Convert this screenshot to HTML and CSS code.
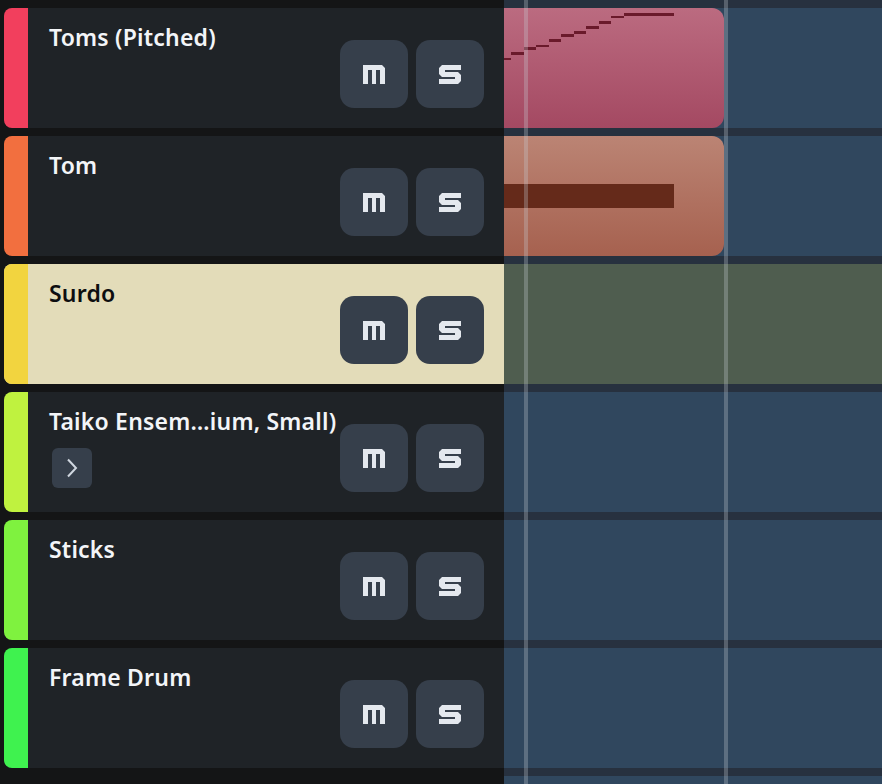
FILE: index.html
```html
<!DOCTYPE html>
<html>
<head>
<meta charset="utf-8">
<link rel="stylesheet" href="styles.css">
</head>
<body>
<div class="app">
  <div class="headers">
    <div class="track">
      <div class="strip c1"></div>
      <div class="head">
        <div class="info"><div class="title">Toms (Pitched)</div></div>
        <div class="btns">
          <button class="btn"><svg width="22" height="19" viewBox="0 0 22 19"><path d="M0 0H19L22 3V19H17V5H13V19H9V5H5V19H0Z"/></svg></button>
          <button class="btn"><svg width="22" height="19" viewBox="0 0 22 19"><path d="M3 0H22V5H6V7H19L22 10V16L19 19H0V14H16V12H3L0 9V3Z"/></svg></button>
        </div>
      </div>
    </div>
    <div class="track">
      <div class="strip c2"></div>
      <div class="head">
        <div class="info"><div class="title">Tom</div></div>
        <div class="btns">
          <button class="btn"><svg width="22" height="19" viewBox="0 0 22 19"><path d="M0 0H19L22 3V19H17V5H13V19H9V5H5V19H0Z"/></svg></button>
          <button class="btn"><svg width="22" height="19" viewBox="0 0 22 19"><path d="M3 0H22V5H6V7H19L22 10V16L19 19H0V14H16V12H3L0 9V3Z"/></svg></button>
        </div>
      </div>
    </div>
    <div class="track selected">
      <div class="strip c3"></div>
      <div class="head">
        <div class="info"><div class="title">Surdo</div></div>
        <div class="btns">
          <button class="btn"><svg width="22" height="19" viewBox="0 0 22 19"><path d="M0 0H19L22 3V19H17V5H13V19H9V5H5V19H0Z"/></svg></button>
          <button class="btn"><svg width="22" height="19" viewBox="0 0 22 19"><path d="M3 0H22V5H6V7H19L22 10V16L19 19H0V14H16V12H3L0 9V3Z"/></svg></button>
        </div>
      </div>
    </div>
    <div class="track">
      <div class="strip c4"></div>
      <div class="head">
        <div class="info">
          <div class="title">Taiko Ensem…ium, Small)</div>
          <button class="expand"><svg width="12" height="20" viewBox="0 0 12 20"><path d="M2 1.5L10 10L2 18.5"/></svg></button>
        </div>
        <div class="btns">
          <button class="btn"><svg width="22" height="19" viewBox="0 0 22 19"><path d="M0 0H19L22 3V19H17V5H13V19H9V5H5V19H0Z"/></svg></button>
          <button class="btn"><svg width="22" height="19" viewBox="0 0 22 19"><path d="M3 0H22V5H6V7H19L22 10V16L19 19H0V14H16V12H3L0 9V3Z"/></svg></button>
        </div>
      </div>
    </div>
    <div class="track">
      <div class="strip c5"></div>
      <div class="head">
        <div class="info"><div class="title">Sticks</div></div>
        <div class="btns">
          <button class="btn"><svg width="22" height="19" viewBox="0 0 22 19"><path d="M0 0H19L22 3V19H17V5H13V19H9V5H5V19H0Z"/></svg></button>
          <button class="btn"><svg width="22" height="19" viewBox="0 0 22 19"><path d="M3 0H22V5H6V7H19L22 10V16L19 19H0V14H16V12H3L0 9V3Z"/></svg></button>
        </div>
      </div>
    </div>
    <div class="track">
      <div class="strip c6"></div>
      <div class="head">
        <div class="info"><div class="title">Frame Drum</div></div>
        <div class="btns">
          <button class="btn"><svg width="22" height="19" viewBox="0 0 22 19"><path d="M0 0H19L22 3V19H17V5H13V19H9V5H5V19H0Z"/></svg></button>
          <button class="btn"><svg width="22" height="19" viewBox="0 0 22 19"><path d="M3 0H22V5H6V7H19L22 10V16L19 19H0V14H16V12H3L0 9V3Z"/></svg></button>
        </div>
      </div>
    </div>
  </div>
  <div class="timeline">
    <div class="lane">
      <div class="clip clip-pink">
        <div class="note" style="left:0;top:50px;width:7px;height:2px"></div>
        <div class="note" style="left:7px;top:44px;width:13px;height:3px"></div>
        <div class="note" style="left:20px;top:39px;width:12px;height:3px"></div>
        <div class="note" style="left:32px;top:37px;width:13px;height:2px"></div>
        <div class="note" style="left:45px;top:31px;width:12px;height:3px"></div>
        <div class="note" style="left:57px;top:26px;width:13px;height:3px"></div>
        <div class="note" style="left:70px;top:23px;width:12px;height:3px"></div>
        <div class="note" style="left:82px;top:18px;width:13px;height:3px"></div>
        <div class="note" style="left:95px;top:13px;width:12px;height:3px"></div>
        <div class="note" style="left:107px;top:8px;width:13px;height:2px"></div>
        <div class="note" style="left:120px;top:5px;width:50px;height:3px"></div>
      </div>
    </div>
    <div class="lane">
      <div class="clip clip-orange">
        <div class="note note-brown" style="left:0;top:48px;width:170px;height:24px"></div>
      </div>
    </div>
    <div class="lane lane-selected"></div>
    <div class="lane"></div>
    <div class="lane"></div>
    <div class="lane"></div>
    <div class="lane"></div>
    <div class="vline" style="left:20px"></div>
    <div class="vline" style="left:220px"></div>
  </div>
</div>
</body>
</html>
```
FILE: styles.css
```css
* { box-sizing: border-box; }
html, body { margin: 0; padding: 0; }
body {
  width: 882px;
  height: 784px;
  overflow: hidden;
  background: #141516;
  font-family: "Noto Sans", "Open Sans", sans-serif;
}
.app {
  display: flex;
  height: 784px;
  overflow: hidden;
}
.headers {
  width: 504px;
  flex: none;
  display: flex;
  flex-direction: column;
  gap: 8px;
  padding: 8px 0 0 4px;
  background: #141516;
  position: relative;
  z-index: 2;
}
.track {
  height: 120px;
  flex: none;
  display: flex;
  border-radius: 8px 0 0 8px;
  overflow: hidden;
  background: #1f2327;
}
.strip { width: 24px; flex: none; }
.c1 { background: #f23f5d; }
.c2 { background: #f26f3f; }
.c3 { background: #f2d43f; }
.c4 { background: #bff23f; }
.c5 { background: #7ff23f; }
.c6 { background: #3ff24f; }
.head {
  flex: 1;
  display: grid;
  grid-template-columns: 1fr auto;
  padding: 14px 20px 20px 21px;
}
.info {
  display: flex;
  flex-direction: column;
  align-items: flex-start;
  min-width: 0;
}
.title {
  font-size: 23px;
  line-height: 30px;
  font-weight: 600;
  letter-spacing: 0.2px;
  color: #f3f5f8;
  white-space: nowrap;
}
.selected { background: #e3dcb9; }
.selected .title { color: #0d0e10; }
.btns {
  align-self: end;
  display: flex;
  gap: 8px;
}
.btn {
  width: 68px;
  height: 68px;
  border: 0;
  padding: 0;
  border-radius: 14px;
  background: #363f4b;
  display: flex;
  align-items: center;
  justify-content: center;
}
.btn svg { fill: #e4e8ee; display: block; }
.expand {
  margin-top: 12px;
  margin-left: 3px;
  width: 40px;
  height: 40px;
  border: 0;
  padding: 0;
  border-radius: 6px;
  background: #363f4b;
  display: flex;
  align-items: center;
  justify-content: center;
}
.expand svg { fill: none; stroke: #cfd6df; stroke-width: 2; display: block; }
.timeline {
  flex: 1;
  position: relative;
  display: flex;
  flex-direction: column;
  gap: 8px;
  padding-top: 8px;
  background: #27313f;
  overflow: hidden;
}
.lane {
  height: 120px;
  flex: none;
  background: #30475e;
  position: relative;
}
.lane-selected { background: #4f5d4f; }
.clip {
  position: absolute;
  left: 0;
  top: 0;
  width: 220px;
  height: 120px;
  border-radius: 0 12px 12px 0;
}
.clip-pink { background: linear-gradient(#bb6b80, #a44962); }
.clip-orange { background: linear-gradient(#bb8474, #a6614f); }
.note {
  position: absolute;
  background: #6a1a2b;
}
.note-brown { background: #652a1a; }
.vline {
  position: absolute;
  top: 0;
  bottom: 0;
  width: 4px;
  background: rgba(200, 205, 212, 0.3);
}
```
